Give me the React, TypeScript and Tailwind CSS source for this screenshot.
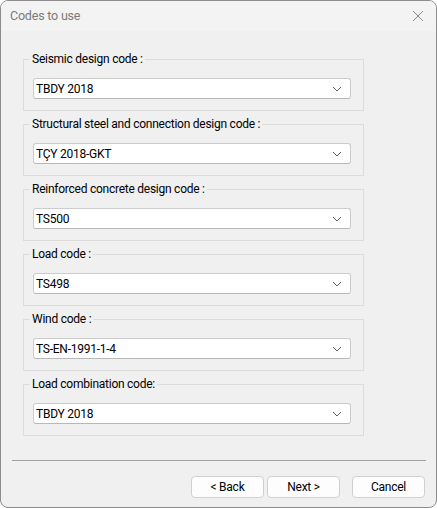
import React from "react";

const groups = [
  { label: "Seismic design code :", value: "TBDY 2018" },
  { label: "Structural steel and connection design code :", value: "TÇY 2018-GKT" },
  { label: "Reinforced concrete design code :", value: "TS500" },
  { label: "Load code :", value: "TS498" },
  { label: "Wind code :", value: "TS-EN-1991-1-4" },
  { label: "Load combination code:", value: "TBDY 2018" },
];

function Chevron() {
  return (
    <svg width="10" height="6" viewBox="0 0 10 6" className="shrink-0">
      <path d="M1 1 L5 5 L9 1" fill="none" stroke="#5f5f5f" strokeWidth="1" />
    </svg>
  );
}

function Group({ label, value }: { label: string; value: string }) {
  return (
    <div className="relative h-[52px] w-[341px] border border-[#dcdcdc]">
      <div className="absolute left-[6px] top-[-9px] bg-[#f0f0f0] px-[2px] text-[12px] leading-[16px] tracking-[-0.25px] text-black">
        {label}
      </div>
      <div className="ml-[9px] mt-[18px] flex h-[21px] w-[318px] items-center justify-between rounded-[3px] border border-[#cccccc] border-b-[#b8b8b8] bg-white pl-[2px] pr-[8px] text-[12px] tracking-[-0.25px] text-black">
        <span className="leading-[16px]">{value}</span>
        <Chevron />
      </div>
    </div>
  );
}

function Btn({ children }: { children: React.ReactNode }) {
  return (
    <div className="flex h-[22px] w-[73px] items-center justify-center rounded-[4px] border border-[#d0d0d0] bg-[#fdfdfd] text-[12px] tracking-[-0.25px] text-black">
      {children}
    </div>
  );
}

export default function App() {
  return (
    <div
      className="flex h-[508px] w-[437px] flex-col overflow-hidden rounded-[8px] border border-[#8c8c8c] bg-[#f0f0f0]"
      style={{ fontFamily: 'Roboto, "Noto Sans", sans-serif' }}
    >
      <div className="flex h-[30px] shrink-0 items-center justify-between bg-[#f3f3f3] pl-[9px] pr-[12px]">
        <span className="text-[12.5px] tracking-[-0.2px] text-[#7a7a7a]">Codes to use</span>
        <svg width="12" height="12" viewBox="0 0 12 12">
          <path d="M1 1 L11 11 M11 1 L1 11" stroke="#8a8a8a" strokeWidth="1" fill="none" />
        </svg>
      </div>
      <div className="flex flex-col gap-[13px] pl-[22px] pt-[28px]">
        {groups.map((g) => (
          <Group key={g.label} label={g.label} value={g.value} />
        ))}
      </div>
      <div className="ml-[11px] mt-[24px] h-px w-[414px] bg-[#a0a0a0]" />
      <div className="mt-[15px] flex pr-[11px] justify-end">
        <div className="flex gap-[3px]">
          <Btn>&lt; Back</Btn>
          <Btn>Next &gt;</Btn>
        </div>
        <div className="ml-[12px]">
          <Btn>Cancel</Btn>
        </div>
      </div>
    </div>
  );
}
